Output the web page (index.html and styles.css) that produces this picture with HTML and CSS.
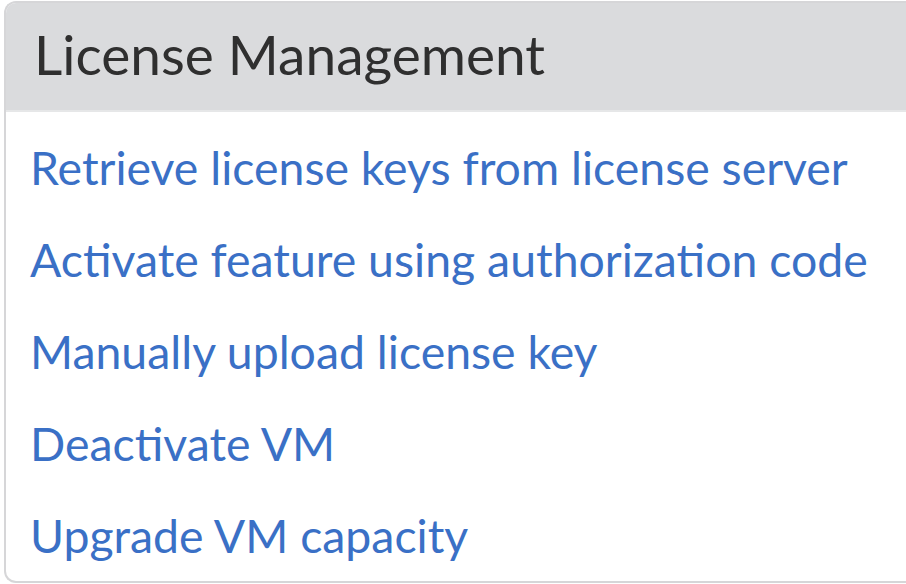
FILE: index.html
```html
<!DOCTYPE html>
<html>
<head>
<meta charset="utf-8">
<link rel="stylesheet" href="styles.css">
</head>
<body>
<div class="panel">
  <div class="panel-header">License Management</div>
  <div class="panel-body">
    <a class="link" href="#">Retrieve license keys from license server</a>
    <a class="link" href="#">Activate feature using authorization code</a>
    <a class="link" href="#">Manually upload license key</a>
    <a class="link" href="#">Deactivate VM</a>
    <a class="link" href="#">Upgrade VM capacity</a>
  </div>
</div>
</body>
</html>
```
FILE: styles.css
```css
html, body {
  margin: 0;
  padding: 0;
  background: #ffffff;
}
body {
  padding: 1px 0 0 4px;
  width: 906px;
  height: 584px;
  box-sizing: border-box;
  overflow: hidden;
  font-family: Lato, "Open Sans", sans-serif;
}
.panel {
  width: 940px;
  height: 582px;
  box-sizing: border-box;
  border: 2px solid #d6d6d8;
  border-right: none;
  border-radius: 12px 0 0 12px;
  overflow: hidden;
  background: #fff;
}
.panel-header {
  height: 109px;
  box-sizing: border-box;
  background: #dadbdd;
  border-bottom: 2px solid #e6e7e8;
  color: #2f2f2f;
  font-size: 55px;
  line-height: 102px;
  padding-left: 28px;
}
.panel-body {
  display: flex;
  flex-direction: column;
  padding: 9px 0 0 24px;
}
.link {
  color: #3a70c6;
  text-decoration: none;
  font-size: 46.4px;
  line-height: 92px;
}
```
